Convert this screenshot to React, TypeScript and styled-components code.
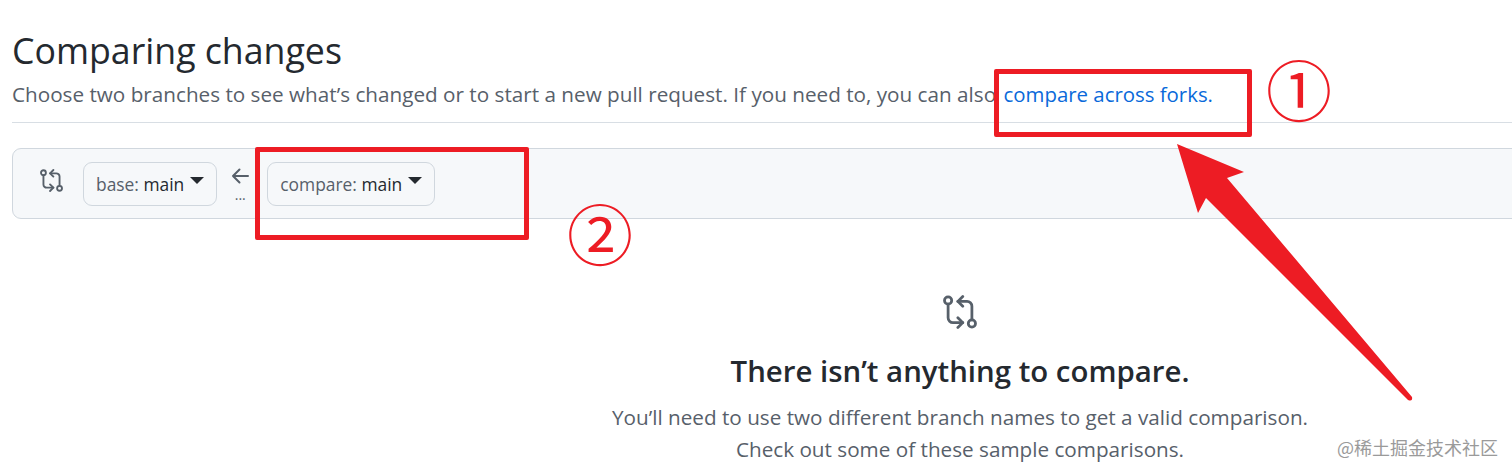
import React from 'react';
import styled, { createGlobalStyle } from 'styled-components';

const GlobalStyle = createGlobalStyle`
  html, body {
    margin: 0;
    padding: 0;
    background: #fff;
    overflow: hidden;
  }
  body {
    font-family: "Open Sans", "Noto Sans", "Liberation Sans", sans-serif;
    color: #24292f;
  }
`;

const CompareIcon = ({ size }: { size: number }) => (
  <svg width={size} height={size} viewBox="0 0 16 16" fill="none" stroke="currentColor" strokeWidth="1.3" strokeLinecap="round" strokeLinejoin="round">
    <circle cx="2.4" cy="2.6" r="1.7" />
    <path d="M2.4 4.3v6.4a2.3 2.3 0 0 0 2.3 2.3h4.6" />
    <path d="M7 10.7l2.3 2.3L7 15.3" />
    <circle cx="13.6" cy="13.4" r="1.7" />
    <path d="M13.6 11.7V5.3A2.3 2.3 0 0 0 11.3 3H7" />
    <path d="M9.3.7L7 3l2.3 2.3" />
  </svg>
);

const Annotations = () => (
  <AnnotationLayer>
    <RedBox $left={994} $top={69} $width={258} $height={68} />
    <RedBox $left={255} $top={147} $width={274} $height={93} />
    <Numeral $left={1266} $top={45}>①</Numeral>
    <Numeral $left={567} $top={189}>②</Numeral>
    <ArrowSvg width="1512" height="473" viewBox="0 0 1512 473">
      <path
        d="M1177 144 L1244 172 L1227 178 L1412 397 Q1413 402 1408 400 L1206 198 L1198 213 Z"
        fill="#ed1c24"
      />
    </ArrowSvg>
    <Watermark>@稀土掘金技术社区</Watermark>
  </AnnotationLayer>
);

export default function App() {
  return (
    <>
      <GlobalStyle />
      <Viewport>
        <Page>
          <Header>
            <Title>Comparing changes</Title>
            <Lead>
              Choose two branches to see what’s changed or to start a new pull request. If you need to, you can also{' '}
              <LeadLink>compare across forks.</LeadLink>
            </Lead>
          </Header>
          <RangeBar>
            <RangeIcon>
              <CompareIcon size={23} />
            </RangeIcon>
            <BranchButton>
              base: <strong>main</strong>
              <Caret />
            </BranchButton>
            <Direction>
              <svg width="20" height="20" viewBox="0 0 20 20" fill="none" stroke="currentColor" strokeWidth="2" strokeLinecap="round" strokeLinejoin="round">
                <path d="M18 10H3M9.5 3.5L3 10l6.5 6.5" />
              </svg>
              <Dots>...</Dots>
            </Direction>
            <BranchButton>
              compare: <strong>main</strong>
              <Caret />
            </BranchButton>
          </RangeBar>
          <Blankslate>
            <BlankIcon>
              <CompareIcon size={34} />
            </BlankIcon>
            <BlankTitle>There isn’t anything to compare.</BlankTitle>
            <BlankText>You’ll need to use two different branch names to get a valid comparison.</BlankText>
            <BlankText>Check out some of these sample comparisons.</BlankText>
          </Blankslate>
        </Page>
        <Annotations />
      </Viewport>
    </>
  );
}

const Viewport = styled.div`
  position: relative;
  width: 1512px;
  height: 473px;
  overflow: hidden;
`;

const Page = styled.main`
  width: 1896px;
  margin-left: 12px;
`;

const Header = styled.header`
  height: 123px;
  padding-top: 28px;
  box-sizing: border-box;
  border-bottom: 1px solid #d8dee4;
`;

const Title = styled.h1`
  margin: 0;
  font-size: 35.7px;
  font-weight: 400;
  line-height: 44px;
  color: #24292f;
`;

const Lead = styled.p`
  margin: 7px 0 0;
  font-size: 20.7px;
  line-height: 30px;
  color: #57606a;
  white-space: nowrap;
`;

const LeadLink = styled.a`
  margin-left: 2px;
  font-size: 20.4px;
  color: #0969da;
`;

const RangeBar = styled.div`
  display: flex;
  align-items: flex-start;
  height: 71px;
  margin-top: 25px;
  padding: 13px 0 0 27px;
  box-sizing: border-box;
  background: #f6f8fa;
  border: 1px solid #d0d7de;
  border-radius: 9px;
`;

const RangeIcon = styled.span`
  display: flex;
  margin: 7px 20px 0 0;
  color: #57606a;
`;

const BranchButton = styled.button`
  display: inline-flex;
  align-items: center;
  height: 44px;
  padding: 0 12px;
  font: inherit;
  font-size: 17.4px;
  color: #57606a;
  background: #f6f8fa;
  border: 1px solid #d0d7de;
  border-radius: 9px;
  white-space: pre;

  strong {
    font-weight: 400;
    color: #24292f;
  }
`;

const Caret = styled.span`
  width: 0;
  height: 0;
  margin: -8px 0 0 6px;
  border-style: solid;
  border-width: 7px 7px 0;
  border-color: #24292f transparent transparent;
`;

const Direction = styled.div`
  display: flex;
  flex-direction: column;
  align-items: center;
  width: 50px;
  box-sizing: border-box;
  padding: 4px 4px 0 0;
  color: #57606a;
`;

const Dots = styled.span`
  font-size: 14px;
  line-height: 14px;
  margin-top: 2px;
`;

const Blankslate = styled.section`
  display: flex;
  flex-direction: column;
  align-items: center;
  padding-top: 76px;
`;

const BlankIcon = styled.span`
  display: flex;
  margin-bottom: 20px;
  color: #57606a;
`;

const BlankTitle = styled.h3`
  margin: 0 0 8px;
  font-size: 29.4px;
  font-weight: 600;
  line-height: 44px;
  color: #24292f;
`;

const BlankText = styled.p`
  margin: 0;
  font-size: 20.7px;
  line-height: 32px;
  color: #57606a;
`;

const AnnotationLayer = styled.div`
  position: absolute;
  inset: 0;
  pointer-events: none;
`;

const RedBox = styled.div<{ $left: number; $top: number; $width: number; $height: number }>`
  position: absolute;
  left: ${p => p.$left}px;
  top: ${p => p.$top}px;
  width: ${p => p.$width}px;
  height: ${p => p.$height}px;
  box-sizing: border-box;
  border: 5px solid #ed1c24;
  border-radius: 2px;
`;

const Numeral = styled.span<{ $left: number; $top: number }>`
  position: absolute;
  left: ${p => p.$left}px;
  top: ${p => p.$top}px;
  font-family: "Noto Sans CJK SC", sans-serif;
  font-size: 66px;
  line-height: 84px;
  color: #ed1c24;
`;

const ArrowSvg = styled.svg`
  position: absolute;
  left: 0;
  top: 0;
`;

const Watermark = styled.span`
  position: absolute;
  left: 1337px;
  top: 435px;
  font-family: "Noto Sans CJK SC", sans-serif;
  font-size: 18px;
  line-height: 24px;
  color: #9a9a9a;
  white-space: nowrap;
`;
